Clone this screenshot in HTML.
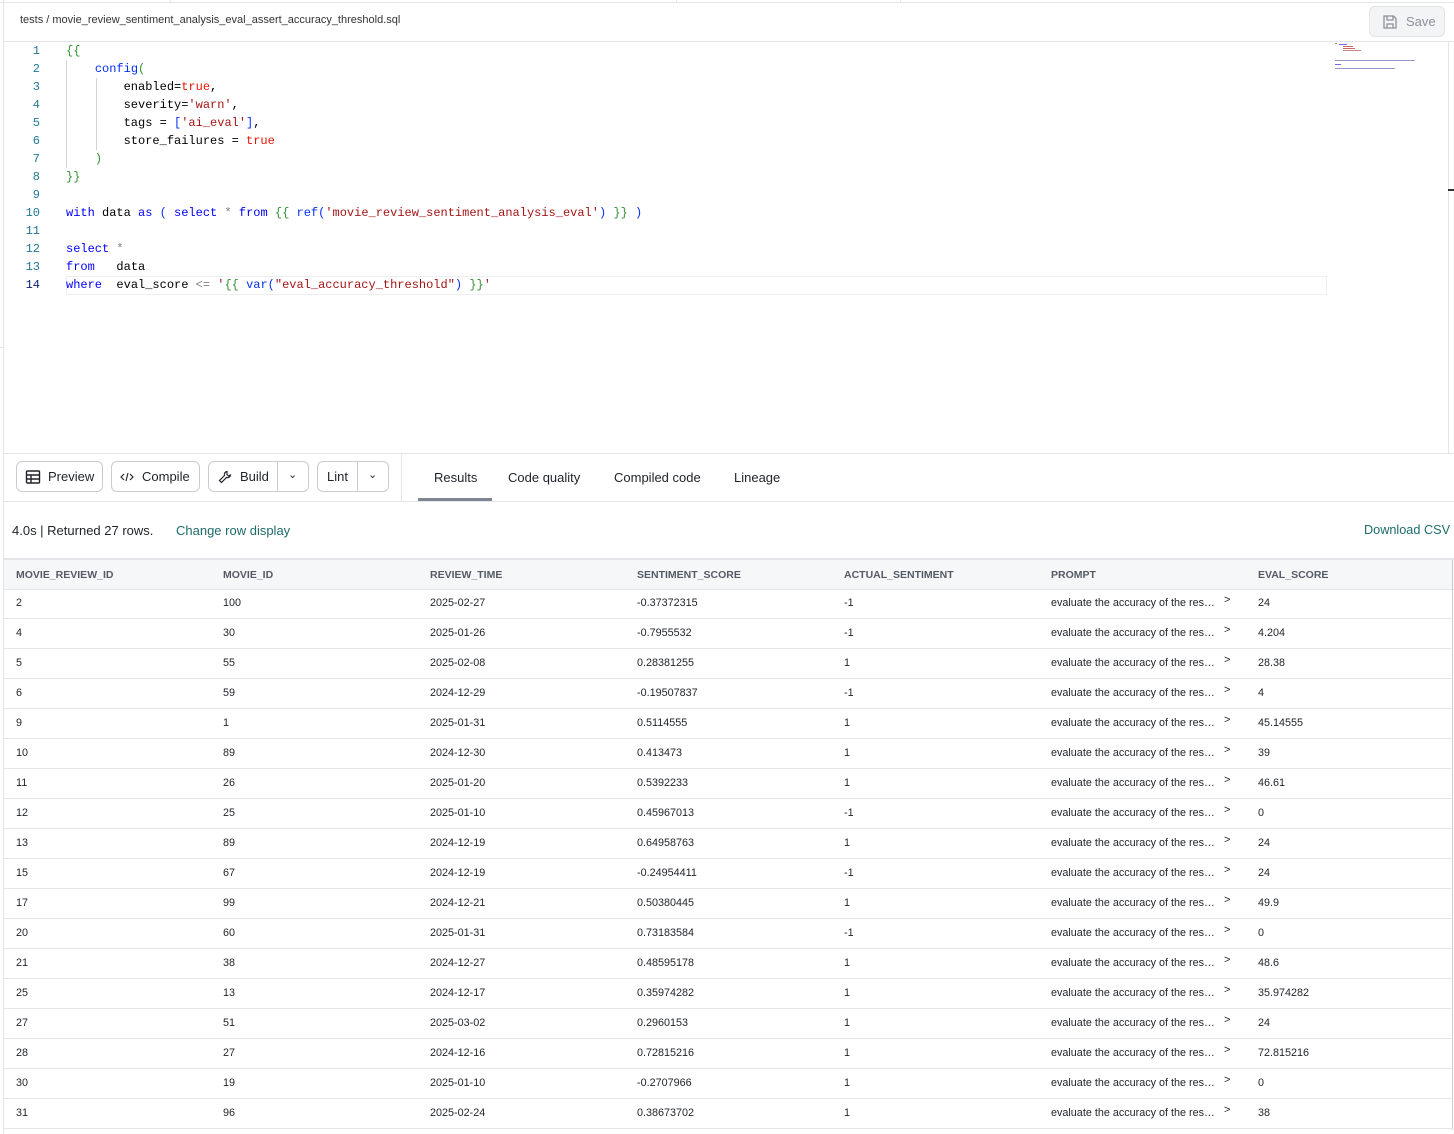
<!DOCTYPE html>
<html><head><meta charset="utf-8"><style>
*{box-sizing:border-box;margin:0;padding:0}
body{width:1454px;height:1134px;background:#fff;position:relative;overflow:hidden;font-family:"Liberation Sans",sans-serif;color:#1f2328}
.abs{position:absolute}
.code{font-family:"Liberation Mono",monospace;font-size:12px;white-space:pre;line-height:18px}
.ln{position:absolute;left:10px;width:30px;text-align:right;color:#237893}
.cl{position:absolute;left:66px;color:#000}
.k{color:#0000ff}.s{color:#a31515}.t{color:#e51400}.b{color:#319331}.g{color:#808080}.p{color:#0431fa}
.btn{position:absolute;top:461px;height:31px;border:1px solid #c9ccd1;border-radius:6px;font-size:13px;display:flex;align-items:center;color:#1f2328;background:#fff}
.tab{position:absolute;top:470px;font-size:13px;color:#1f2328}
.th{position:absolute;font-size:10.5px;font-weight:bold;color:#555b66;top:569px}
.row{position:absolute;left:4px;width:1449px;height:30px;border-bottom:1px solid #e3e5e8}
.row span{position:absolute;top:8px;font-size:10.8px;color:#1f2328}
.mm{position:absolute;height:1px}
</style></head><body>
<div class="abs" style="left:0;top:0;width:1454px;height:3px;border-bottom:1px solid #e3e5e8"></div>
<div class="abs" style="left:170px;top:0;width:1px;height:3px;background:#e3e5e8"></div>
<div class="abs" style="left:676px;top:0;width:1px;height:3px;background:#e3e5e8"></div>
<div class="abs" style="left:900px;top:0;width:1px;height:3px;background:#e3e5e8"></div>
<div class="abs" style="left:3px;top:0;width:1px;height:1134px;background:#e3e5e8"></div>
<div class="abs" style="left:4px;top:41px;width:1450px;height:1px;background:#e3e5e8"></div>
<div class="abs" style="left:20px;top:14px;font-size:11px;color:#333">tests / movie_review_sentiment_analysis_eval_assert_accuracy_threshold.sql</div>
<div class="abs" style="left:1369px;top:6px;width:76px;height:31px;border:1px solid #e1e3e6;border-radius:6px;background:#f3f4f6;color:#8b919a;font-size:13px;display:flex;align-items:center;padding-left:12px">
<svg width="16" height="16" viewBox="0 0 16 16" fill="none" stroke="#8b919a" stroke-width="1.3"><path d="M2 2h9.5L14 4.5V14H2z"/><path d="M5 2v4h6V2"/><path d="M5 14v-4h6v4"/></svg><span style="margin-left:8px">Save</span></div>
<div class="mm" style="left:1335px;top:43px;width:2px;background:#999"></div>
<div class="mm" style="left:1339px;top:44px;width:8px;background:#66f"></div>
<div class="mm" style="left:1343px;top:46px;width:10px;background:#c66"></div>
<div class="mm" style="left:1343px;top:48px;width:12px;background:#c66"></div>
<div class="mm" style="left:1343px;top:50px;width:18px;background:#c88"></div>
<div class="mm" style="left:1335px;top:60px;width:80px;background:#99c"></div>
<div class="mm" style="left:1335px;top:64px;width:6px;background:#66f"></div>
<div class="mm" style="left:1335px;top:68px;width:60px;background:#99c"></div>
<div class="abs" style="left:1448px;top:42px;width:1px;height:412px;background:#e3e5e8"></div>
<div class="abs" style="left:1448px;top:189px;width:6px;height:2px;background:#333"></div>
<div class="abs" style="left:66px;top:276px;width:1261px;height:19px;border:1px solid #eceef0"></div>
<div class="abs" style="left:66px;top:60px;width:1px;height:108px;background:#d4d4d4"></div>
<div class="abs" style="left:96px;top:78px;width:1px;height:72px;background:#d4d4d4"></div>
<div class="code">
<div class="ln" style="top:42px">1</div><div class="cl" style="top:42px"><span class="b">{{</span></div>
<div class="ln" style="top:60px">2</div><div class="cl" style="top:60px">    <span class="p">config</span><span class="b">(</span></div>
<div class="ln" style="top:78px">3</div><div class="cl" style="top:78px">        enabled=<span class="t">true</span>,</div>
<div class="ln" style="top:96px">4</div><div class="cl" style="top:96px">        severity=<span class="s">'warn'</span>,</div>
<div class="ln" style="top:114px">5</div><div class="cl" style="top:114px">        tags = <span class="p">[</span><span class="s">'ai_eval'</span><span class="p">]</span>,</div>
<div class="ln" style="top:132px">6</div><div class="cl" style="top:132px">        store_failures = <span class="t">true</span></div>
<div class="ln" style="top:150px">7</div><div class="cl" style="top:150px">    <span class="b">)</span></div>
<div class="ln" style="top:168px">8</div><div class="cl" style="top:168px"><span class="b">}}</span></div>
<div class="ln" style="top:186px">9</div>
<div class="ln" style="top:204px">10</div><div class="cl" style="top:204px"><span class="k">with</span> data <span class="k">as</span> <span class="p">(</span> <span class="k">select</span> <span class="g">*</span> <span class="k">from</span> <span class="b">{{</span> <span class="p">ref(</span><span class="s">'movie_review_sentiment_analysis_eval'</span><span class="p">)</span> <span class="b">}}</span> <span class="p">)</span></div>
<div class="ln" style="top:222px">11</div>
<div class="ln" style="top:240px">12</div><div class="cl" style="top:240px"><span class="k">select</span> <span class="g">*</span></div>
<div class="ln" style="top:258px">13</div><div class="cl" style="top:258px"><span class="k">from</span>   data</div>
<div class="ln" style="top:276px;color:#0b216f">14</div><div class="cl" style="top:276px"><span class="k">where</span>  eval_score <span class="g">&lt;=</span> <span class="s">'</span><span class="b">{{</span> <span class="p">var(</span><span class="s">"eval_accuracy_threshold"</span><span class="p">)</span> <span class="b">}}</span><span class="s">'</span></div>
</div>
<div class="abs" style="left:0;top:347px;width:3px;height:1px;background:#e3e5e8"></div>
<div class="abs" style="left:4px;top:453px;width:1450px;height:1px;background:#e3e5e8"></div>
<div class="abs" style="left:4px;top:501px;width:1450px;height:1px;background:#e3e5e8"></div>
<div class="abs" style="left:401px;top:454px;width:1px;height:47px;background:#e3e5e8"></div>
<div class="btn" style="left:16px;width:87px;padding-left:8px"><svg width="16" height="16" viewBox="0 0 16 16" fill="none" stroke="#1f2328" stroke-width="1.4"><rect x="1.5" y="2" width="13" height="12" rx="1"/><path d="M1.5 6h13M1.5 10h13M6 6v8"/></svg><span style="margin-left:7px">Preview</span></div>
<div class="btn" style="left:111px;width:89px;padding-left:8px"><svg width="14" height="14" viewBox="0 0 14 14" fill="none" stroke="#1f2328" stroke-width="1.1"><path d="M4 4L1 7l3 3M10 4l3 3-3 3M8 3L6 11"/></svg><span style="margin-left:8px">Compile</span></div>
<div class="btn" style="left:208px;width:101px;padding-left:9px"><svg width="14" height="14" viewBox="0 0 14 14" fill="none" stroke="#1f2328" stroke-width="1.2"><path d="M9 1.5a3 3 0 0 0-2.5 4L1.5 10.5l2 2 5-5a3 3 0 0 0 4-2.5l-2 1-1.5-1.5z"/></svg><span style="margin-left:8px">Build</span><span style="position:absolute;left:68px;top:0;width:1px;height:29px;background:#c9ccd1"></span><span style="position:absolute;left:79px;top:6px;font-size:11px">&#8964;</span></div>
<div class="btn" style="left:317px;width:72px;padding-left:9px"><span>Lint</span><span style="position:absolute;left:39px;top:0;width:1px;height:29px;background:#c9ccd1"></span><span style="position:absolute;left:50px;top:6px;font-size:11px">&#8964;</span></div>
<div class="tab" style="left:434px">Results</div>
<div class="abs" style="left:418px;top:498px;width:74px;height:3px;background:#7d8590"></div>
<div class="tab" style="left:508px">Code quality</div>
<div class="tab" style="left:614px">Compiled code</div>
<div class="tab" style="left:734px">Lineage</div>
<div class="abs" style="left:12px;top:523px;font-size:13px">4.0s | Returned 27 rows.</div>
<div class="abs" style="left:176px;top:523px;font-size:13px;color:#1e6b6b">Change row display</div>
<div class="abs" style="left:1364px;top:523px;font-size:12.7px;color:#1e6b6b">Download CSV</div>
<div class="abs" style="left:4px;top:558px;width:1450px;height:32px;background:#f6f7f8;border-top:2px solid #e3e5e8;border-bottom:1px solid #e3e5e8"></div>
<div class="abs" style="left:1452px;top:560px;width:1px;height:570px;background:#c9ccd1"></div>
<div class="th" style="left:16px">MOVIE_REVIEW_ID</div><div class="th" style="left:223px">MOVIE_ID</div><div class="th" style="left:430px">REVIEW_TIME</div><div class="th" style="left:637px">SENTIMENT_SCORE</div><div class="th" style="left:844px">ACTUAL_SENTIMENT</div><div class="th" style="left:1051px">PROMPT</div><div class="th" style="left:1258px">EVAL_SCORE</div>
<div id="rows"></div>
<script>
var d=[[2,100,"2025-02-27","-0.37372315",-1,24],[4,30,"2025-01-26","-0.7955532",-1,"4.204"],[5,55,"2025-02-08","0.28381255",1,"28.38"],[6,59,"2024-12-29","-0.19507837",-1,4],[9,1,"2025-01-31","0.5114555",1,"45.14555"],[10,89,"2024-12-30","0.413473",1,39],[11,26,"2025-01-20","0.5392233",1,"46.61"],[12,25,"2025-01-10","0.45967013",-1,0],[13,89,"2024-12-19","0.64958763",1,24],[15,67,"2024-12-19","-0.24954411",-1,24],[17,99,"2024-12-21","0.50380445",1,"49.9"],[20,60,"2025-01-31","0.73183584",-1,0],[21,38,"2024-12-27","0.48595178",1,"48.6"],[25,13,"2024-12-17","0.35974282",1,"35.974282"],[27,51,"2025-03-02","0.2960153",1,24],[28,27,"2024-12-16","0.72815216",1,"72.815216"],[30,19,"2025-01-10","-0.2707966",1,0],[31,96,"2025-02-24","0.38673702",1,38]];
var h="";d.forEach(function(r,i){var t=589+i*30;h+='<div class="row" style="top:'+t+'px"><span style="left:12px">'+r[0]+'</span><span style="left:219px">'+r[1]+'</span><span style="left:426px">'+r[2]+'</span><span style="left:633px">'+r[3]+'</span><span style="left:840px">'+r[4]+'</span><span style="left:1047px">evaluate the accuracy of the res…</span><span style="left:1220px;top:5px;font-size:11px">&gt;</span><span style="left:1254px">'+r[5]+'</span></div>';});
document.getElementById("rows").innerHTML=h;
</script>
</body></html>
